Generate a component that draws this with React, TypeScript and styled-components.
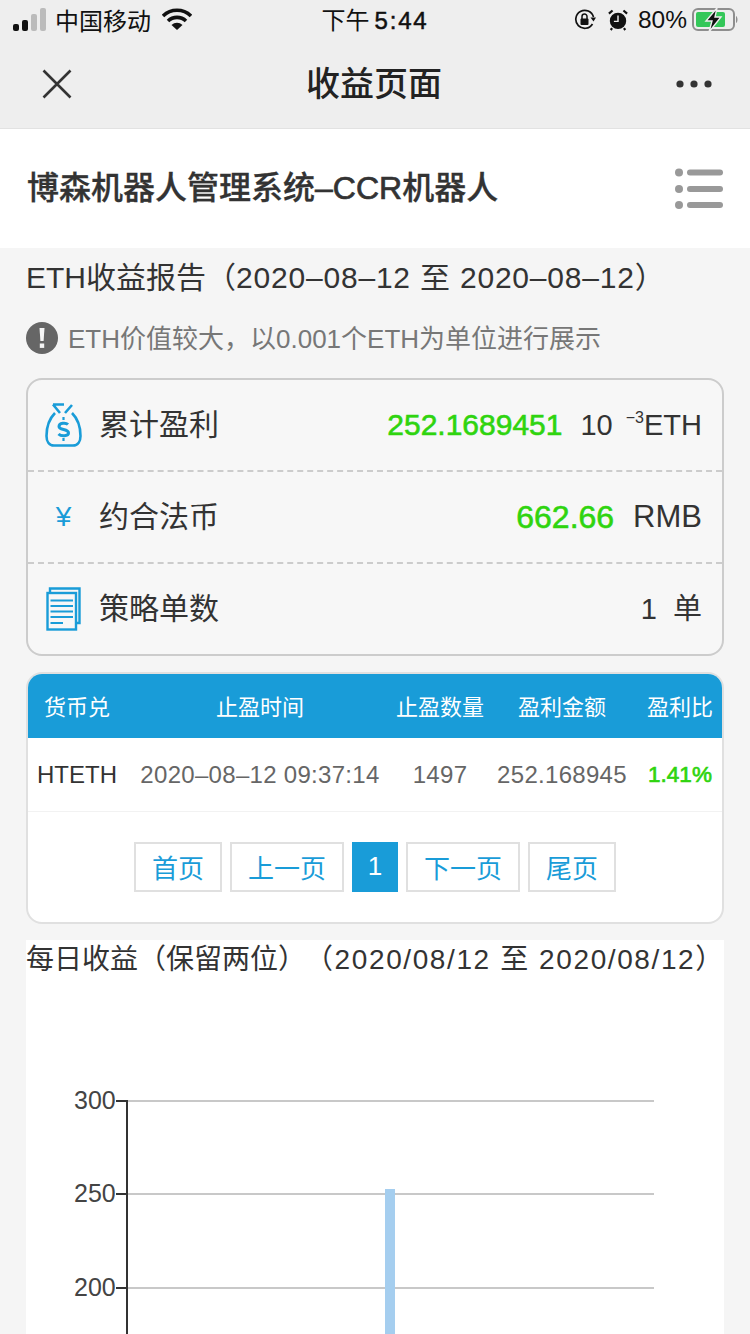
import * as React from "react";
import styled, { createGlobalStyle } from "styled-components";

const BLUE = "#199cd8";
const GREEN = "#2fd40f";
const FONT = `"Liberation Sans", "Noto Sans CJK SC", sans-serif`;

const GlobalStyle = createGlobalStyle`
  html, body {
    margin: 0;
    padding: 0;
    background: #f5f5f5;
    font-family: ${FONT};
    color: #333;
    overflow: hidden;
  }
`;

const Page = styled.div`
  width: 750px;
  height: 1334px;
  overflow: hidden;
`;

const TopBars = styled.div`
  background: #eeeeee;
  height: 128px;
  border-bottom: 1px solid #e2e2e2;
`;

const StatusBar = styled.div`
  height: 40px;
  display: grid;
  grid-template-columns: 1fr auto 1fr;
  align-items: center;
  font-size: 24px;
  color: #111;
`;

const StatusLeft = styled.div`
  display: flex;
  align-items: center;
  padding-left: 13px;
  gap: 7px;
`;

const Carrier = styled.span`
  margin-bottom: 2px;
  margin-right: 4px;
`;

const StatusTime = styled.div`
  margin-bottom: 3px;
`;

const Clock = styled.span`
  margin-left: 5px;
  font-weight: 400;
  letter-spacing: 1.8px;
  -webkit-text-stroke: 0.5px #111;
`;

const StatusRight = styled.div`
  display: flex;
  align-items: center;
  justify-content: flex-end;
  padding-right: 11px;
`;

const Percent = styled.span`
  font-size: 24.5px;
  margin: 0 5px 0 10px;
`;

const NavBar = styled.div`
  height: 88px;
  display: flex;
  align-items: center;
  justify-content: space-between;
  padding: 0 38px 0 42px;
`;

const NavTitle = styled.div`
  font-size: 34px;
  font-weight: 500;
  color: #222;
  margin-bottom: 6px;
`;

const Header = styled.div`
  height: 119px;
  background: #fff;
  display: flex;
  align-items: center;
  justify-content: space-between;
  padding: 0 26px 0 27px;
`;

const HeaderTitle = styled.div`
  font-size: 32px;
  font-weight: 500;
  color: #333;
  -webkit-text-stroke: 0.3px #333;
  margin-bottom: 8px;
  white-space: nowrap;
`;

const HeaderLatin = styled.span`
  -webkit-text-stroke: 0.7px #333;
`;

const Content = styled.div`
  padding: 0 26px;
`;

const ReportTitle = styled.div`
  font-size: 30px;
  line-height: 60px;
  color: #333;
  white-space: nowrap;
`;

const ReportDates = styled.span`
  letter-spacing: 0.8px;
`;

const Notice = styled.div`
  display: flex;
  align-items: center;
  gap: 10px;
  height: 60px;
  font-size: 26px;
  color: #777;
  margin-bottom: 10px;
  white-space: nowrap;
`;

const NoticeText = styled.span`
  margin-bottom: 4px;
`;

const Card = styled.div`
  border: 2px solid #cccccc;
  border-radius: 16px;
  background: #f7f7f7;
`;

const SummaryRow = styled.div<{ $last?: boolean }>`
  height: 90px;
  display: flex;
  align-items: center;
  padding: 0 20px 0 16px;
  border-bottom: ${(p) => (p.$last ? "none" : "2px dashed #cccccc")};
`;

const IconSlot = styled.div`
  width: 39px;
  display: flex;
  justify-content: center;
  margin-right: 16px;
`;

const YuanSign = styled.span`
  color: ${BLUE};
  font-size: 28px;
`;

const RowLabel = styled.div`
  flex: 1;
  font-size: 30px;
  color: #333;
  margin-bottom: 7px;
`;

const Amount = styled.span<{ $big?: boolean }>`
  color: ${GREEN};
  font-size: ${(p) => (p.$big ? "32px" : "30px")};
  -webkit-text-stroke: 0.6px ${GREEN};
  margin-right: ${(p) => (p.$big ? "19px" : "18px")};
`;

const Unit = styled.span<{ $big?: boolean }>`
  color: #333;
  font-size: ${(p) => (p.$big ? "31px" : "29px")};
`;

const CountText = styled(Unit)`
  margin-bottom: 7px;
`;

const Power = styled.sup`
  font-size: 16px;
  vertical-align: 12px;
  line-height: 0;
  margin-left: 13px;
`;

const TableCard = styled.div`
  margin-top: 16px;
  height: 252px;
  box-sizing: border-box;
  border: 2px solid #e0e0e0;
  border-radius: 16px;
  background: #fff;
  overflow: hidden;
`;

const Columns = styled.div<{ $head?: boolean }>`
  display: grid;
  grid-template-columns: 98px 268px 92px 152px 84px;
  align-items: center;
  justify-items: center;
  height: ${(p) => (p.$head ? "64px" : "74px")};
  background: ${(p) => (p.$head ? BLUE : "#fff")};
  color: ${(p) => (p.$head ? "#fff" : "#666")};
  border-bottom: ${(p) => (p.$head ? "none" : "1px solid #f2f2f2")};
  box-sizing: border-box;
  padding-bottom: ${(p) => (p.$head ? "2px" : "0")};
  font-size: ${(p) => (p.$head ? "22px" : "24px")};
  letter-spacing: ${(p) => (p.$head ? "0" : "0.3px")};
  white-space: nowrap;
`;

const PairCell = styled.span`
  color: #333;
  letter-spacing: 0;
`;

const RatioCell = styled.span`
  color: ${GREEN};
  letter-spacing: 0;
  font-size: 22.5px;
  -webkit-text-stroke: 0.7px ${GREEN};
`;

const Pager = styled.div`
  display: flex;
  justify-content: center;
  gap: 8px;
  padding-top: 30px;
`;

const PageButton = styled.div<{ $w: number; $active?: boolean }>`
  width: ${(p) => p.$w}px;
  height: 50px;
  box-sizing: border-box;
  display: flex;
  align-items: center;
  justify-content: center;
  padding-bottom: 2px;
  font-size: 26px;
  border: 2px solid ${(p) => (p.$active ? BLUE : "#e0e0e0")};
  background: ${(p) => (p.$active ? BLUE : "#fff")};
  color: ${(p) => (p.$active ? "#fff" : BLUE)};
`;

const ChartBlock = styled.div`
  margin-top: 16px;
  background: #fff;
  height: 400px;
`;

const ChartTitle = styled.div`
  font-size: 28px;
  line-height: 40px;
  color: #333;
  white-space: nowrap;
`;

const DateRange = styled.span`
  margin-left: 13px;
  letter-spacing: 1.6px;
`;

const ChartSvg = styled.svg`
  display: block;
`;

const ChartLabel = styled.text`
  font-family: ${FONT};
  font-size: 25px;
  fill: #444;
`;

const Signal = () => (
  <svg width="35" height="24" viewBox="0 0 35 24">
    <rect x="0" y="16" width="6" height="7" rx="2" fill="#111" />
    <rect x="9" y="12" width="6" height="11" rx="2" fill="#111" />
    <rect x="18" y="6" width="6" height="17" rx="2" fill="#bbb" />
    <rect x="27" y="0" width="6" height="23" rx="2" fill="#bbb" />
  </svg>
);

const Wifi = () => (
  <svg width="30" height="24" viewBox="0 0 30 24">
    <path d="M1 8 A20 20 0 0 1 29 8" fill="none" stroke="#111" strokeWidth="3.6" />
    <path d="M6 13 A13 13 0 0 1 24 13" fill="none" stroke="#111" strokeWidth="3.6" />
    <path d="M9.5 17 A8 8 0 0 1 20.5 17 L15 22 Z" fill="#111" />
  </svg>
);

const RotationLock = () => (
  <svg width="22" height="22" viewBox="0 0 22 22">
    <path d="M18.5 15 A9 9 0 1 1 19.5 8" fill="none" stroke="#111" strokeWidth="1.7" />
    <path d="M16.5 8.5 L22 8.5 L19.5 12.5 Z" fill="#111" />
    <rect x="6.5" y="9.5" width="8" height="6.5" rx="1" fill="#111" />
    <path d="M8 10 V7.5 A2.5 2.5 0 0 1 13 7.5 V10" fill="none" stroke="#111" strokeWidth="1.5" />
  </svg>
);

const AlarmIcon = styled.svg`
  margin-left: 12px;
`;

const AlarmClock = () => (
  <AlarmIcon width="20" height="22" viewBox="0 0 22 24">
    <circle cx="11" cy="13" r="9" fill="#111" />
    <path d="M1 5 L5 1.5 M21 5 L17 1.5 M4.5 21 L3 23 M17.5 21 L19 23" stroke="#111" strokeWidth="2.4" />
    <path d="M11 7 V13.5 H6.5" fill="none" stroke="#eee" strokeWidth="1.6" />
  </AlarmIcon>
);

const Battery = () => (
  <svg width="47" height="26" viewBox="0 0 47 26">
    <rect x="1" y="2" width="41" height="21" rx="5" fill="none" stroke="#8e8e8e" strokeWidth="2" />
    <rect x="4" y="5" width="29" height="15" rx="2" fill="#34c759" />
    <path d="M44 9 C46 10 46 15 44 16 Z" fill="#8e8e8e" />
    <path d="M25 1 L14 14 H20 L17 25 L29 10 H23 Z" fill="#111" stroke="#eee" strokeWidth="1.4" />
  </svg>
);

const CloseIcon = () => (
  <svg width="30" height="30" viewBox="0 0 30 30">
    <path d="M1.5 1.5 L28.5 28.5 M28.5 1.5 L1.5 28.5" stroke="#333" strokeWidth="2.6" />
  </svg>
);

const MoreIcon = () => (
  <svg width="36" height="8" viewBox="0 0 36 8">
    <circle cx="4" cy="4" r="3.6" fill="#333" />
    <circle cx="18" cy="4" r="3.6" fill="#333" />
    <circle cx="32" cy="4" r="3.6" fill="#333" />
  </svg>
);

const MenuIcon = () => (
  <svg width="50" height="42" viewBox="0 0 50 42">
    {[4.5, 21, 37].map((y) => (
      <g key={y}>
        <circle cx="5" cy={y} r="4" fill="#999" />
        <rect x="13" y={y - 3} width="36" height="6" rx="3" fill="#999" />
      </g>
    ))}
  </svg>
);

const WarnIcon = () => (
  <svg width="32" height="32" viewBox="0 0 32 32">
    <circle cx="16" cy="16" r="16" fill="#666" />
    <path d="M13.5 6 H18.5 L17.6 19 H14.4 Z" fill="#f5f5f5" />
    <rect x="13.8" y="21.5" width="4.4" height="4.4" fill="#f5f5f5" />
  </svg>
);

const MoneyBag = () => (
  <svg width="37" height="44" viewBox="0 0 37 44">
    <path
      d="M10 10 C5 15 1.5 22 1.5 33 C1.5 38 4 42.5 9 42.5 H28 C33 42.5 35.5 38 35.5 33 C35.5 22 32 15 27 10"
      fill="none"
      stroke={BLUE}
      strokeWidth="2.6"
    />
    <path d="M8 1.5 H19 M8 1.5 L15 10 M27 2 L20 10" fill="none" stroke={BLUE} strokeWidth="2.6" />
    <path
      d="M23 21.5 C21 19.5 14 19.5 14 23.5 C14 27.5 23.5 25.5 23.5 30 C23.5 33.5 16 33.5 13.5 31"
      fill="none"
      stroke={BLUE}
      strokeWidth="3"
    />
    <path d="M18.5 14 V17 M18.5 35 V38" stroke={BLUE} strokeWidth="2.2" />
  </svg>
);

const DocStack = () => (
  <svg width="35" height="44" viewBox="0 0 35 44">
    <path d="M4 5 V1.5 H33.5 V36 H30" fill="none" stroke={BLUE} strokeWidth="2.4" />
    <rect x="1.5" y="6" width="28.5" height="36.5" fill="#f7f7f7" stroke={BLUE} strokeWidth="2.4" />
    <path d="M4.5 13.5 H27 M4.5 19 H27 M4.5 24.5 H27 M4.5 30 H27 M4.5 36 H17" stroke={BLUE} strokeWidth="2.2" />
  </svg>
);

const DailyChart = () => (
  <ChartSvg width="698" height="360" viewBox="0 0 698 360">
    {[
      { y: 120, label: "300" },
      { y: 213, label: "250" },
      { y: 307, label: "200" },
    ].map((t) => (
      <g key={t.label}>
        <ChartLabel x="48" y={t.y + 9}>
          {t.label}
        </ChartLabel>
        <rect x="102" y={t.y} width="526" height="2" fill="#c8c8c8" />
        <rect x="90" y={t.y} width="12" height="2" fill="#333" />
      </g>
    ))}
    <rect x="100" y="120" width="2" height="240" fill="#333" />
    <rect x="359" y="209" width="10" height="151" fill="#a5ceef" />
  </ChartSvg>
);

const App = () => (
  <Page>
    <GlobalStyle />
    <TopBars>
      <StatusBar>
        <StatusLeft>
          <Signal />
          <Carrier>中国移动</Carrier>
          <Wifi />
        </StatusLeft>
        <StatusTime>
          下午<Clock>5:44</Clock>
        </StatusTime>
        <StatusRight>
          <RotationLock />
          <AlarmClock />
          <Percent>80%</Percent>
          <Battery />
        </StatusRight>
      </StatusBar>
      <NavBar>
        <CloseIcon />
        <NavTitle>收益页面</NavTitle>
        <MoreIcon />
      </NavBar>
    </TopBars>
    <Header>
      <HeaderTitle>
        博森机器人管理系统<HeaderLatin>–CCR</HeaderLatin>机器人
      </HeaderTitle>
      <MenuIcon />
    </Header>
    <Content>
      <ReportTitle>
        ETH收益报告（<ReportDates>2020–08–12 至 2020–08–12</ReportDates>）
      </ReportTitle>
      <Notice>
        <WarnIcon />
        <NoticeText>ETH价值较大，以0.001个ETH为单位进行展示</NoticeText>
      </Notice>
      <Card>
        <SummaryRow>
          <IconSlot>
            <MoneyBag />
          </IconSlot>
          <RowLabel>累计盈利</RowLabel>
          <Amount>252.1689451</Amount>
          <Unit>
            10<Power>−3</Power>ETH
          </Unit>
        </SummaryRow>
        <SummaryRow>
          <IconSlot>
            <YuanSign>¥</YuanSign>
          </IconSlot>
          <RowLabel>约合法币</RowLabel>
          <Amount $big>662.66</Amount>
          <Unit $big>RMB</Unit>
        </SummaryRow>
        <SummaryRow $last>
          <IconSlot>
            <DocStack />
          </IconSlot>
          <RowLabel>策略单数</RowLabel>
          <CountText>1&nbsp;&nbsp;单</CountText>
        </SummaryRow>
      </Card>
      <TableCard>
        <Columns $head>
          <span>货币兑</span>
          <span>止盈时间</span>
          <span>止盈数量</span>
          <span>盈利金额</span>
          <span>盈利比</span>
        </Columns>
        <Columns>
          <PairCell>HTETH</PairCell>
          <span>2020–08–12 09:37:14</span>
          <span>1497</span>
          <span>252.168945</span>
          <RatioCell>1.41%</RatioCell>
        </Columns>
        <Pager>
          <PageButton $w={88}>首页</PageButton>
          <PageButton $w={114}>上一页</PageButton>
          <PageButton $w={46} $active>
            1
          </PageButton>
          <PageButton $w={114}>下一页</PageButton>
          <PageButton $w={88}>尾页</PageButton>
        </Pager>
      </TableCard>
      <ChartBlock>
        <ChartTitle>
          每日收益（保留两位）<DateRange>（2020/08/12 至 2020/08/12）</DateRange>
        </ChartTitle>
        <DailyChart />
      </ChartBlock>
    </Content>
  </Page>
);

export default App;
